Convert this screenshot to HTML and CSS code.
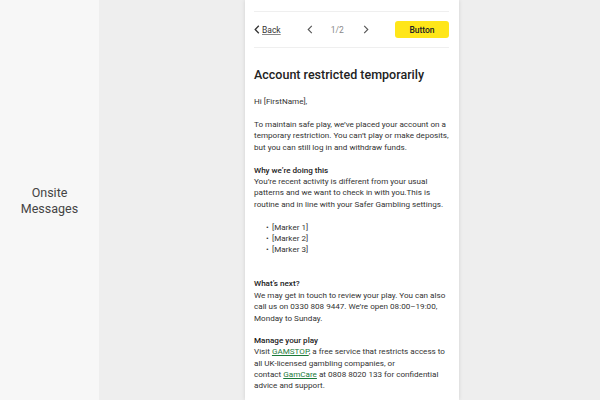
FILE: index.html
```html
<!DOCTYPE html>
<html>
<head>
<meta charset="utf-8">
<link rel="stylesheet" href="styles.css">
</head>
<body>
<div class="page">
  <aside class="side"><div class="side-label">Onsite<br>Messages</div></aside>
  <main class="stage">
    <section class="card">
      <div class="sep top-sep"></div>
      <div class="toolbar">
        <a class="back">
          <svg width="6" height="9" viewBox="0 0 6 9"><path d="M4.8 0.8 L1.2 4.5 L4.8 8.2" fill="none" stroke="#333" stroke-width="1.3"/></svg>
          <span>Back</span>
        </a>
        <div class="pager">
          <svg width="6" height="9" viewBox="0 0 6 9"><path d="M4.8 0.8 L1.2 4.5 L4.8 8.2" fill="none" stroke="#555" stroke-width="1.1"/></svg>
          <span class="count">1/2</span>
          <svg width="6" height="9" viewBox="0 0 6 9"><path d="M1.2 0.8 L4.8 4.5 L1.2 8.2" fill="none" stroke="#555" stroke-width="1.1"/></svg>
        </div>
        <button class="btn">Button</button>
      </div>
      <div class="sep"></div>
      <h1 class="title">Account restricted temporarily</h1>
      <p class="greet">Hi [FirstName],</p>
      <p>To maintain safe play, we’ve placed your account on a temporary restriction. You can’t play or make deposits, but you can still log in and withdraw funds.</p>
      <p><b>Why we’re doing this</b><br>You’re recent activity is different from your usual patterns and we want to check in with you.This is routine and in line with your Safer Gambling settings.</p>
      <ul class="markers">
        <li>[Marker 1]</li>
        <li>[Marker 2]</li>
        <li>[Marker 3]</li>
      </ul>
      <p class="gap"><b>What’s next?</b><br>We may get in touch to review your play. You can also call us on 0330 808 9447. We’re open 08:00–19:00, Monday to Sunday.</p>
      <p class="manage"><b>Manage your play</b><br>Visit <a class="lnk">GAMSTOP</a>, a free service that restricts access to all UK-licensed gambling companies, or<br>contact <a class="lnk">GamCare</a> at 0808 8020 133 for confidential advice and support.</p>
    </section>
  </main>
</div>
</body>
</html>
```
FILE: styles.css
```css
html, body { margin: 0; padding: 0; }
body { width: 600px; height: 400px; overflow: hidden; font-family: Roboto, "Liberation Sans", sans-serif; background: #eeeeee; }
.page { display: flex; height: 400px; }
.side { width: 99px; background: #f7f7f7; display: flex; align-items: center; justify-content: center; flex-shrink: 0; }
.side-label { font-size: 12.5px; line-height: 16px; color: #444; text-align: center; margin-top: 2px; }
.stage { flex: 1; display: flex; justify-content: flex-start; padding-left: 146px; }
.card { width: 195px; background: #fff; padding: 0 10px 0 9px; box-shadow: 0 0 4px rgba(0,0,0,0.12); height: 400px; overflow: hidden; }
.sep { height: 1px; background: #efefef; }
.top-sep { margin-top: 11px; }
.toolbar { display: flex; align-items: center; height: 35px; }
.back { display: flex; align-items: center; gap: 2px; font-size: 8.5px; color: #333; }
.back span { text-decoration: underline; text-decoration-color: #888; text-underline-offset: 1px; }
.pager { display: flex; align-items: center; margin-left: 26px; color: #888; font-size: 8.5px; }
.count { margin: 0 19px 0 18px; }
.btn { margin-left: auto; width: 54px; height: 17px; border: none; border-radius: 3px; background: #ffe619; font-family: inherit; font-size: 8.5px; font-weight: 500; color: #222; padding: 0; }
.title { font-size: 12.5px; font-weight: 500; color: #222; margin: 19px 0 0; line-height: 16px; }
p { font-size: 8.1px; line-height: 11.4px; color: #333; margin: 11.5px 0 0; }
p.greet { margin-top: 13px; }
b { font-weight: 500; color: #222; }
.markers { list-style: none; margin: 11.5px 0 0; padding: 0 0 0 12px; font-size: 8.1px; line-height: 11.2px; color: #333; }
.markers li { height: 11.2px; }
.markers li::before { content: "•"; display: inline-block; width: 6px; }
.gap { margin-top: 23px; }
.manage { margin-top: 10.8px; }
.lnk { color: #1c7a3a; text-decoration: underline; }
```
